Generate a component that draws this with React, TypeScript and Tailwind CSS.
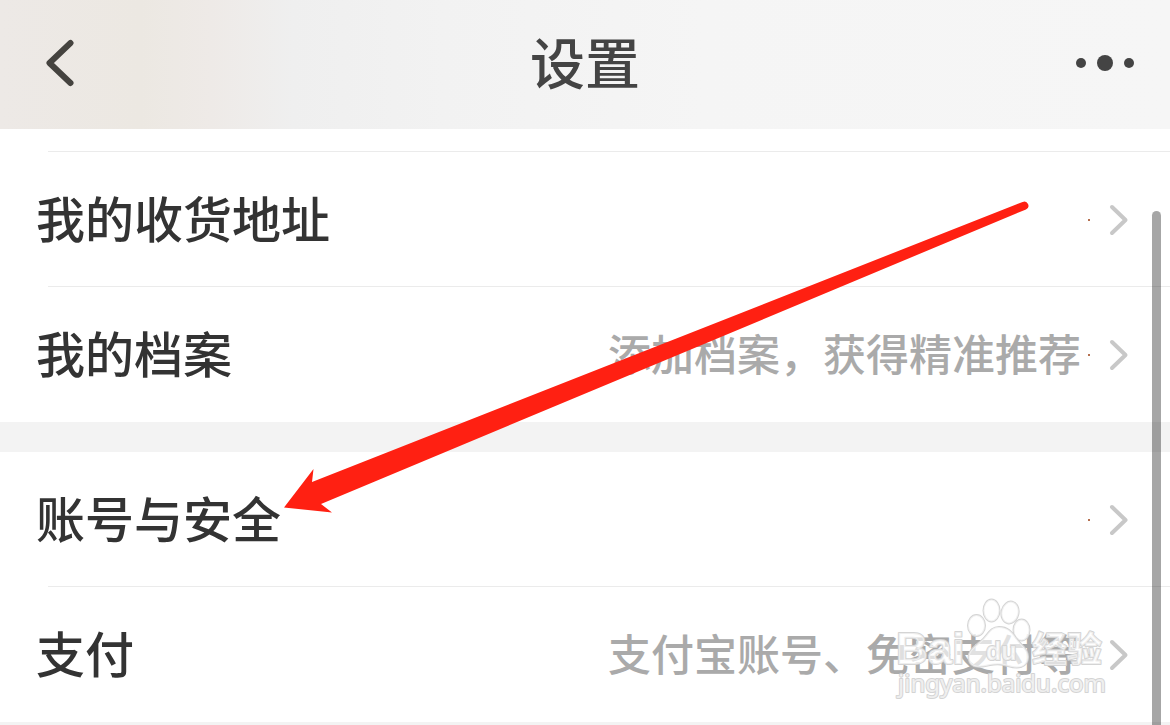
import React from "react";

type Item = { label: string; hint?: string };

const profileItems: Item[] = [
  { label: "我的收货地址" },
  { label: "我的档案", hint: "添加档案，获得精准推荐" },
];

const accountItems: Item[] = [
  { label: "账号与安全" },
  { label: "支付", hint: "支付宝账号、免密支付等" },
];

function Chevron() {
  return (
    <svg className="h-[34px] w-5 shrink-0" viewBox="0 0 20 34" fill="none" aria-hidden="true">
      <path d="M3 4 L16.5 17 L3 30" stroke="#c8c8c8" strokeWidth="4" strokeLinecap="round" strokeLinejoin="round" />
    </svg>
  );
}

function Row({ label, hint }: Item) {
  return (
    <a href="#" className="flex flex-1 items-center pt-px pr-[41px] pl-9">
      <span className="flex-1 pb-[6px] text-[49px] leading-[72px] font-medium whitespace-nowrap text-[#333333]">
        {label}
      </span>
      {hint && (
        <span className="pb-[6px] text-[43px] leading-[64px] font-medium whitespace-nowrap text-[#aaaaaa]">{hint}</span>
      )}
      <span className="ml-[7px] size-[2px] shrink-0 bg-[#b5704f]" />
      <span className="ml-[19px] flex">
        <Chevron />
      </span>
    </a>
  );
}

function Group({ items }: { items: Item[] }) {
  return (
    <ul className="bg-white">
      {items.map((item, i) => (
        <li key={item.label} className="flex h-[135px] flex-col">
          <Row {...item} />
          {i < items.length - 1 && <div className="ml-12 h-px bg-[#ebebeb]" />}
        </li>
      ))}
    </ul>
  );
}

function Arrow() {
  return (
    <svg className="pointer-events-none absolute top-[190px] left-[270px] h-[340px] w-[780px]" viewBox="270 190 780 340" aria-hidden="true">
      <path
        d="M284 507.5 L313.5 469 L312 482 L1022.6 202 A4 4 0 0 1 1026 209.4 L321 504 L332 512.5 Z"
        fill="#ff2012"
      />
    </svg>
  );
}

function Watermark() {
  return (
    <svg
      className="pointer-events-none absolute top-[590px] right-[50px] h-[120px] w-[230px] font-['Noto_Sans','Noto_Sans_CJK_SC',sans-serif]"
      viewBox="890 590 230 120"
      aria-hidden="true"
    >
      <g fill="#ffffff" fillOpacity="0.65" stroke="#d4d4d4" strokeWidth="2" paintOrder="stroke" strokeLinejoin="round">
        <text x="896" y="664" fontSize="44" fontWeight="700" className="font-['Liberation_Sans',sans-serif]">Bai</text>
        <text x="1032" y="662" fontSize="35" fontWeight="700">经验</text>
        <ellipse cx="976.5" cy="625.5" rx="8.5" ry="10.5" />
        <ellipse cx="991.5" cy="610.5" rx="8" ry="11" />
        <ellipse cx="1010" cy="612.5" rx="8.5" ry="11" transform="rotate(12 1010 612.5)" />
        <ellipse cx="1021.5" cy="630" rx="8" ry="10.5" />
        <path d="M999 627 C990 627 988 635 981 641 C973 648 967 652 969 660 C971 669 982 667 990 665 C996 664 1002 664 1008 666 C1018 669 1027 668 1028 658 C1029 650 1021 645 1016 638 C1012 632 1008 627 999 627 Z" />
        <text x="986" y="660" fontSize="25" fontWeight="700" className="font-['Liberation_Sans',sans-serif]">du</text>
        <text x="898" y="692" fontSize="24" fontWeight="400">jingyan.baidu.com</text>
      </g>
    </svg>
  );
}

export default function App() {
  return (
    <div className="relative flex min-h-screen flex-col overflow-hidden bg-[#f3f3f3] font-['Noto_Sans_CJK_SC',sans-serif]">
      <header className="grid h-[129px] grid-cols-3 items-center bg-[linear-gradient(to_right,#ede9e6_0%,#ece8e2_12%,#eeeae7_18%,#efefef_25%,#f2f2f2_38%,#f5f5f5_60%,#f6f6f6_100%)] px-9 pb-[3px]">
        <button type="button" aria-label="返回" className="ml-2 justify-self-start">
          <svg className="h-12 w-8" viewBox="0 0 32 48" fill="none" aria-hidden="true">
            <path d="M26.5 4 L5.5 24 L26.5 44" stroke="#45433f" strokeWidth="6" strokeLinecap="round" strokeLinejoin="round" />
          </svg>
        </button>
        <h1 className="pb-[6px] text-center text-[55px] leading-[80px] font-medium text-[#444444]">设置</h1>
        <button type="button" aria-label="更多" className="flex items-center gap-[11px] justify-self-end">
          <span className="size-[10px] rounded-full bg-[#444444]" />
          <span className="size-4 rounded-full bg-[#444444]" />
          <span className="size-[10px] rounded-full bg-[#444444]" />
        </button>
      </header>
      <main>
        <div className="bg-white pt-[22px]">
          <div className="ml-12 h-px bg-[#ebebeb]" />
        </div>
        <Group items={profileItems} />
        <div className="h-[30px]" />
        <Group items={accountItems} />
      </main>
      <Arrow />
      <Watermark />
      <div className="pointer-events-none absolute top-[211px] right-[9px] bottom-0 w-[9px] rounded-t-full bg-black/35" />
    </div>
  );
}
